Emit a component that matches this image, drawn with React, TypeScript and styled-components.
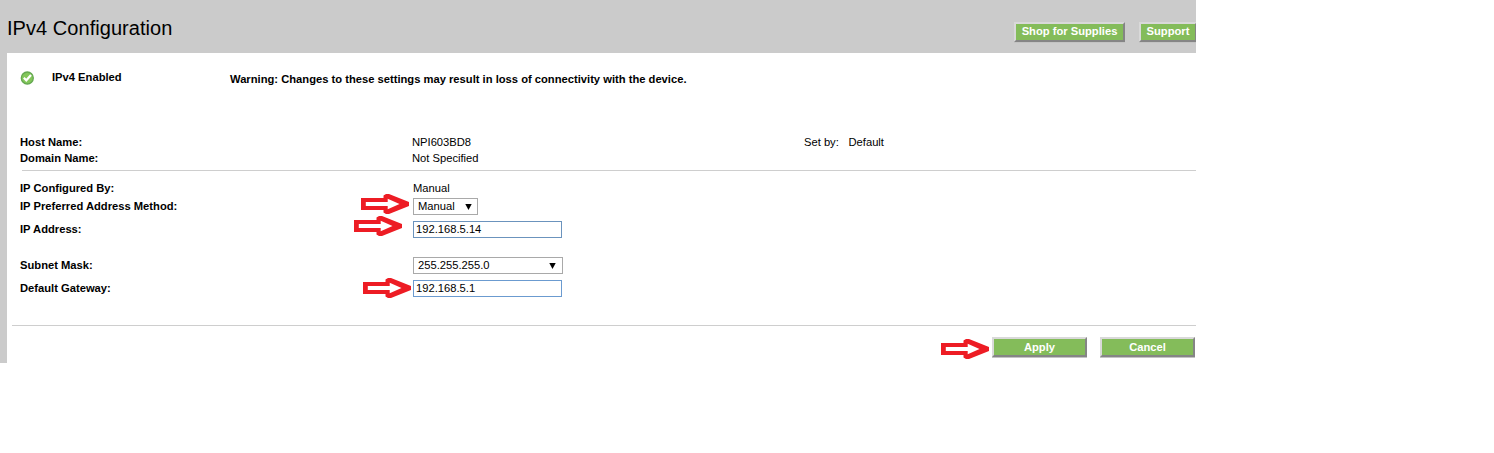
import React from 'react';
import styled, { createGlobalStyle } from 'styled-components';

const GlobalStyle = createGlobalStyle`
  * { box-sizing: border-box; }
  body { margin: 0; background: #fff; color: #000; font: 11.2px/16px "Liberation Sans", Arial, sans-serif; }
`;

const Page = styled.main`
  width: 1196px;
  height: 363px;
  overflow: hidden;
  background: #cbcbcb;
`;

const Header = styled.header`
  height: 53px;
  padding-left: 7px;
  display: flex;
  justify-content: space-between;
`;

const Title = styled.h1`
  margin: 16px 0 0;
  font-size: 20px;
  line-height: 24px;
  font-weight: 400;
  letter-spacing: 0.05px;
`;

const HeaderActions = styled.div`
  display: flex;
  gap: 14px;
  margin: 22px -1px 0 0;
`;

const Button = styled.button<{ $width: number }>`
  width: ${p => p.$width}px;
  height: 20px;
  padding: 0 0 2px;
  flex: none;
  border: 2px solid;
  border-color: #d9d9d9 #858585 #858585 #d9d9d9;
  box-shadow: 0 1px 0 #c3c3c3;
  background: #84bc5a;
  color: #fff;
  font: bold 11.2px/14px "Liberation Sans", Arial, sans-serif;
  white-space: nowrap;
`;

const Panel = styled.section`
  height: 310px;
  margin-left: 7px;
  background: #fff;
`;

const Status = styled.div`
  display: flex;
  height: 81px;
  padding: 16px 0 0 13px;
`;

const StatusIcon = styled.svg`
  width: 15px;
  height: 15px;
  margin: 1px 17px 0 0;
`;

const StatusLabel = styled.strong`
  width: 178px;
`;

const Warning = styled.strong`
  margin-top: 2px;
`;

const Row = styled.div<{ $height: number; $top?: number; $shift?: number }>`
  display: grid;
  grid-template-columns: ${p => 392 + (p.$shift ?? 0)}px ${p => 392 - (p.$shift ?? 0)}px 44.5px auto;
  height: ${p => p.$height}px;
  padding: ${p => p.$top ?? 0}px 0 0 13px;
  align-items: start;
`;

const Label = styled.strong``;

const Value = styled.span``;

const FieldCell = styled.div`
  position: relative;
  height: 17px;
`;

const Field = styled.div<{ $width: number; $color: string; $pad: number; $arrow?: number }>`
  width: ${p => p.$width}px;
  height: 17px;
  border: 1px solid ${p => p.$color};
  padding: 0 ${p => p.$arrow ?? 0}px 0 ${p => p.$pad}px;
  display: flex;
  align-items: center;
  justify-content: space-between;
  line-height: 15px;
`;

const Caret = styled.svg`
  width: 7px;
  height: 6px;
`;

const Rule = styled.hr<{ $left: number }>`
  height: 1px;
  border: 0;
  margin: 0 0 0 ${p => p.$left}px;
  background: #cecece;
`;

const Footer = styled.footer`
  position: relative;
  display: flex;
  justify-content: flex-end;
  gap: 13px;
  padding: 11px 1px 0 0;

  ${Button} {
    padding: 0;
  }
`;

const Pointer = styled.svg<{ $left: number; $top: number }>`
  position: absolute;
  left: ${p => p.$left}px;
  top: ${p => p.$top}px;
  width: 50px;
  height: 20px;
`;

function Arrow({ left, top }: { left: number; top: number }) {
  return (
    <Pointer $left={left} $top={top} viewBox="0 0 50 20">
      <path d="M0 4H22.5V1.5L25 0H28L48 8V12L28 20H25L22.5 18.5V16H0Z" fill="#ed1c24" />
      <path d="M4.8 8H26.7V4.8L38.5 10 26.7 15.2V12H4.8Z" fill="#fff" />
    </Pointer>
  );
}

function Down() {
  return <Caret viewBox="0 0 7 6"><path d="M0.3 0H6.7L3.5 6Z" fill="#000" /></Caret>;
}

export default function App() {
  return (
    <>
      <GlobalStyle />
      <Page>
        <Header>
          <Title>IPv4 Configuration</Title>
          <HeaderActions>
            <Button $width={111}>Shop for Supplies</Button>
            <Button $width={58}>Support</Button>
          </HeaderActions>
        </Header>
        <Panel>
          <Status>
            <StatusIcon viewBox="0 0 15 15">
              <circle cx="7.3" cy="8" r="6" fill="#83c65a" stroke="#64a850" strokeWidth="1.3" />
              <path d="M3.8 7.8 6.3 10.3 11 5" fill="none" stroke="#fff" strokeWidth="2.2" />
            </StatusIcon>
            <StatusLabel>IPv4 Enabled</StatusLabel>
            <Warning>Warning: Changes to these settings may result in loss of connectivity with the device.</Warning>
          </Status>
          <Row $height={16}>
            <Label>Host Name:</Label>
            <Value>NPI603BD8</Value>
            <Value>Set by:</Value>
            <Value>Default</Value>
          </Row>
          <Row $height={20}>
            <Label>Domain Name:</Label>
            <Value>Not Specified</Value>
          </Row>
          <Rule $left={15} />
          <Row $height={26} $top={9} $shift={1}>
            <Label>IP Configured By:</Label>
            <Value>Manual</Value>
          </Row>
          <Row $height={24} $top={1} $shift={1}>
            <Label>IP Preferred Address Method:</Label>
            <FieldCell>
              <Field $width={65} $color="#a9a9a9" $pad={4} $arrow={5}>Manual<Down /></Field>
              <Arrow left={-52} top={-4} />
            </FieldCell>
          </Row>
          <Row $height={36} $shift={1}>
            <Label>IP Address:</Label>
            <FieldCell>
              <Field $width={149} $color="#6b93bd" $pad={2}>192.168.5.14</Field>
              <Arrow left={-59} top={-5} />
            </FieldCell>
          </Row>
          <Row $height={23} $shift={1}>
            <Label>Subnet Mask:</Label>
            <Field $width={150} $color="#a9a9a9" $pad={4} $arrow={6}>255.255.255.0<Down /></Field>
          </Row>
          <Row $height={45} $shift={1}>
            <Label>Default Gateway:</Label>
            <FieldCell>
              <Field $width={149} $color="#6b9bd0" $pad={2}>192.168.5.1</Field>
              <Arrow left={-50} top={-2} />
            </FieldCell>
          </Row>
          <Rule $left={5} />
          <Footer>
            <Arrow left={934} top={13} />
            <Button $width={95}>Apply</Button>
            <Button $width={95}>Cancel</Button>
          </Footer>
        </Panel>
      </Page>
    </>
  );
}
